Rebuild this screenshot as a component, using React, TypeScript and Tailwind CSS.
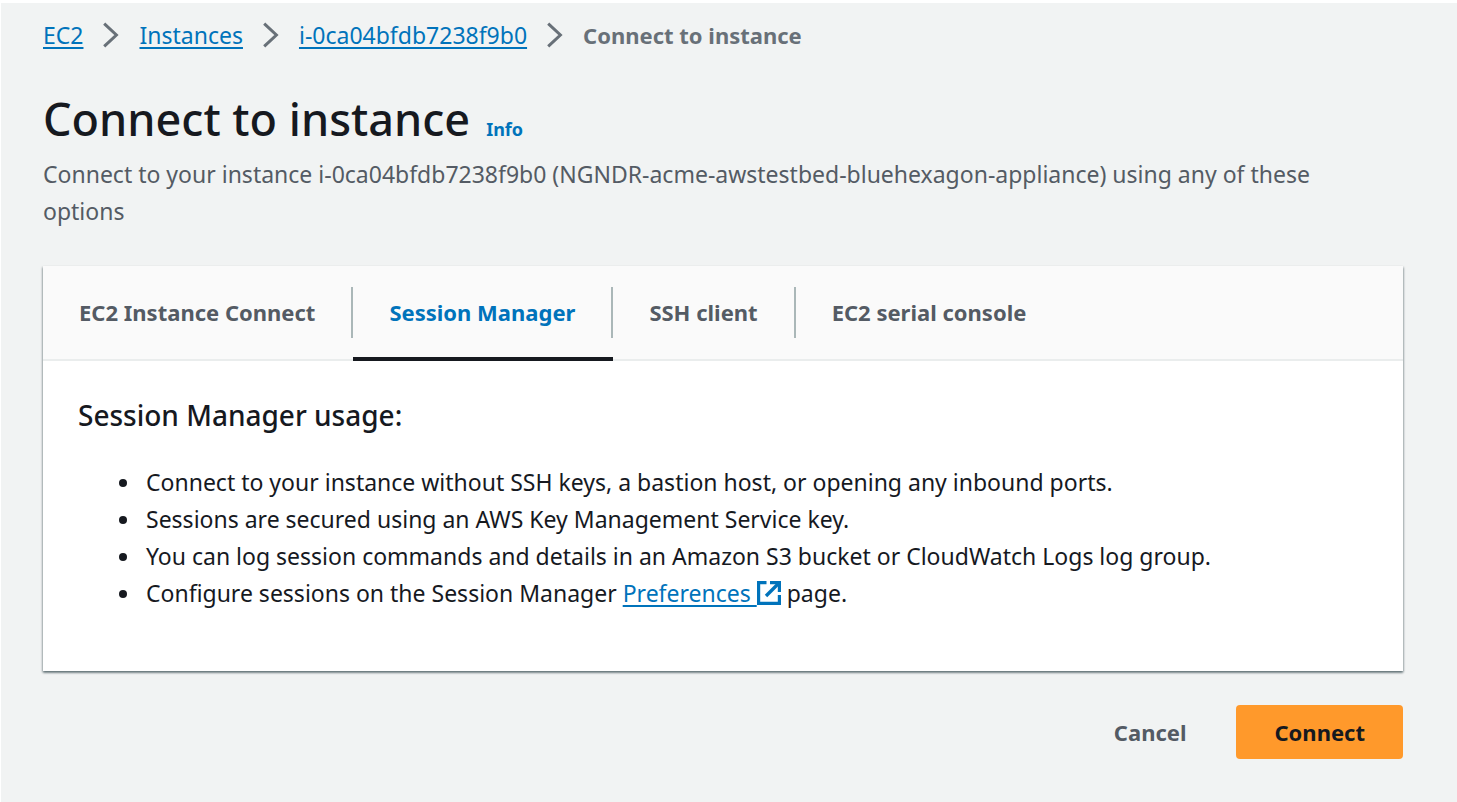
import React, { useState } from "react";

const crumbs = ["EC2", "Instances", "i-0ca04bfdb7238f9b0"];
const tabs = ["EC2 Instance Connect", "Session Manager", "SSH client", "EC2 serial console"];

function Chevron() {
  return (
    <svg viewBox="0 0 16 26" className="h-[26px] w-4 shrink-0" fill="none" stroke="#687078" strokeWidth="3" aria-hidden="true">
      <path d="M1.2 1.6 L13.4 13 L1.2 24.4" />
    </svg>
  );
}

function ExternalIcon() {
  return (
    <svg viewBox="0 0 24 24" className="inline-block size-6 align-[-3px]" fill="none" stroke="#0073bb" strokeWidth="3.2" aria-hidden="true">
      <path d="M9.5 1.6 H1.6 V22.4 H22.4 V14" />
      <path d="M13 1.6 H22.4 V11" />
      <path d="M21.5 2.5 L9 15" strokeWidth="3.4" />
    </svg>
  );
}

export default function App() {
  const [active, setActive] = useState("Session Manager");

  return (
    <main className="min-h-screen border-t-3 border-l border-white bg-[#f1f3f3] pr-[54px] pb-10 pl-[42px] font-['Noto_Sans',sans-serif] text-[#16191f]">
      <nav aria-label="Breadcrumb" className="pt-3.5">
        <ol className="flex items-center gap-5 text-[22px] leading-9">
          {crumbs.map((c) => (
            <li key={c} className="flex items-center gap-5">
              <a href="#" className="text-[23px] text-[#0073bb] underline decoration-2 underline-offset-3">{c}</a>
              <Chevron />
            </li>
          ))}
          <li aria-current="page" className="font-bold text-[#687078]">Connect to instance</li>
        </ol>
      </nav>

      <header className="pt-9">
        <div className="flex items-baseline gap-4">
          <h1 className="text-[45px] leading-[60px] font-medium">Connect to instance</h1>
          <a href="#" className="text-lg font-bold text-[#0073bb]">Info</a>
        </div>
        <p className="pt-[7px] pr-10 text-[23px] leading-[37px] text-[#545b64]">
          Connect to your instance i-0ca04bfdb7238f9b0 (NGNDR-acme-awstestbed-bluehexagon-appliance) using any of these options
        </p>
      </header>

      <section className="mt-9 bg-white pb-[59px] shadow-[0_2px_2px_0_rgba(0,28,36,0.4),1px_1px_2px_0_rgba(0,28,36,0.2),-1px_1px_2px_0_rgba(0,28,36,0.2)]">
        <div role="tablist" aria-label="Connection method" className="flex border-b-2 border-[#eaeded] bg-[#fafafa]">
          {tabs.map((t, i) => (
            <button
              key={t}
              id={`tab-${i}`}
              type="button"
              role="tab"
              aria-selected={t === active}
              onClick={() => setActive(t)}
              className={`-mb-0.5 border-b-4 pt-[21px] pb-[19px] ${t === active ? "border-[#16191f] text-[#0073bb]" : "border-transparent text-[#545b64]"}`}
            >
              <span className={`block px-9 text-[22px] leading-[51px] font-bold ${i < tabs.length - 1 ? "border-r-2 border-[#aab7b8]" : ""}`}>{t}</span>
            </button>
          ))}
        </div>
        <div role="tabpanel" aria-labelledby="tab-1" className="px-[35px] pt-8">
          <h2 className="text-[28px] leading-[44px] font-medium">Session Manager usage:</h2>
          <ul className="list-disc pt-[27px] pl-16 text-[23px] leading-[37px]">
            <li className="pl-1">Connect to your instance without SSH keys, a bastion host, or opening any inbound ports.</li>
            <li className="pl-1">Sessions are secured using an AWS Key Management Service key.</li>
            <li className="pl-1">You can log session commands and details in an Amazon S3 bucket or CloudWatch Logs log group.</li>
            <li className="pl-1">
              Configure sessions on the Session Manager{" "}
              <a href="#" className="text-[#0073bb] underline decoration-2 underline-offset-3">Preferences <ExternalIcon /></a> page.
            </li>
          </ul>
        </div>
      </section>

      <div className="flex justify-end gap-3 pt-[34px] text-[22px] leading-[54px] font-bold">
        <button type="button" className="px-[38px] text-[#545b64]">Cancel</button>
        <button type="button" className="rounded-sm bg-[#ff992b] px-[38px] text-[#16191f]">Connect</button>
      </div>
    </main>
  );
}
